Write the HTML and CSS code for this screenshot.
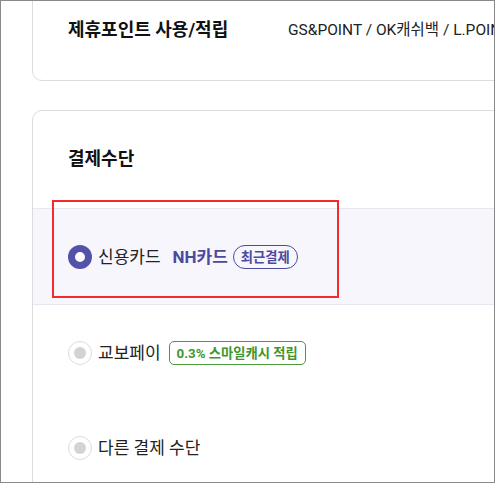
FILE: index.html
```html
<!DOCTYPE html>
<html lang="ko">
<head>
<meta charset="utf-8">
<link rel="stylesheet" href="styles.css">
</head>
<body>
<div class="frame">
  <div class="page">
    <section class="card card-points">
      <h2 class="title points-title">제휴포인트 사용/적립</h2>
      <p class="points-value">GS&amp;POINT / OK캐쉬백 / L.POINT / 해피포인트</p>
    </section>
    <section class="card card-pay">
      <h2 class="title pay-title">결제수단</h2>
      <ul class="methods">
        <li class="method selected">
          <span class="radio on"></span>
          <span class="label">신용카드</span>
          <span class="card-name">NH카드</span>
          <span class="badge recent">최근결제</span>
          <span class="highlight"></span>
        </li>
        <li class="method">
          <span class="radio"></span>
          <span class="label">교보페이</span>
          <span class="badge cash">0.3% 스마일캐시 적립</span>
        </li>
        <li class="method">
          <span class="radio"></span>
          <span class="label">다른 결제 수단</span>
        </li>
      </ul>
    </section>
  </div>
</div>
</body>
</html>
```
FILE: styles.css
```css
html, body {
  margin: 0;
  padding: 0;
  background: #fff;
}
body {
  font-family: Roboto, "Noto Sans CJK KR", sans-serif;
  color: #222;
}
.frame {
  width: 495px;
  height: 483px;
  box-sizing: border-box;
  border: 1px solid #8a8a8a;
  overflow: hidden;
}
.page {
  padding-left: 31px;
  margin-top: -20px;
}
.card {
  width: 600px;
  border: 1px solid #dcdcdc;
  border-radius: 10px;
  background: #fff;
}
.title {
  margin: 0;
  font-size: 18px;
  line-height: 24px;
  font-weight: 700;
  color: #111;
}
.card-points {
  display: flex;
  align-items: center;
  padding: 36px 35px 38px;
}
.points-title {
  flex: 0 0 220px;
}
.points-value {
  margin: 0;
  font-size: 15.5px;
  line-height: 24px;
  color: #222;
  white-space: nowrap;
}
.card-pay {
  margin-top: 29px;
  padding-top: 36px;
}
.pay-title {
  padding-left: 35px;
  margin-bottom: 37px;
}
.methods {
  list-style: none;
  margin: 0;
  padding: 0;
}
.method {
  position: relative;
  display: flex;
  align-items: center;
  height: 95px;
  padding-left: 35px;
  font-size: 17px;
}
.method.selected {
  background: #f6f6fc;
  border-top: 1px solid #e7e7ef;
  border-bottom: 1px solid #e7e7ef;
}
.radio {
  width: 24px;
  height: 24px;
  box-sizing: border-box;
  border-radius: 50%;
  border: 1px solid #dcdcdc;
  background: #fff;
  display: flex;
  align-items: center;
  justify-content: center;
  margin-right: 6px;
  flex: none;
}
.radio::after {
  content: "";
  width: 12px;
  height: 12px;
  border-radius: 50%;
  background: #d3d3d3;
}
.radio.on {
  border: 7px solid #5352a8;
}
.radio.on::after {
  display: none;
}
.label {
  line-height: 24px;
  color: #222;
}
.card-name {
  margin-left: 12px;
  font-weight: 700;
  color: #4b4a9e;
  line-height: 24px;
}
.badge {
  display: inline-flex;
  align-items: center;
  height: 24px;
  box-sizing: border-box;
  font-size: 13.3px;
  font-weight: 700;
  white-space: nowrap;
}
.badge.recent {
  margin-left: 5px;
  padding: 0 7px;
  border: 1px solid #4b4a9e;
  border-radius: 12px;
  color: #4b4a9e;
}
.badge.cash {
  margin-left: 8px;
  padding: 0 7px;
  border: 1px solid #4a9a3a;
  border-radius: 5px;
  color: #3f962d;
}
.highlight {
  position: absolute;
  left: 19px;
  top: -9px;
  width: 287px;
  height: 98px;
  box-sizing: border-box;
  border: 2px solid #f52a2a;
  pointer-events: none;
}
```
